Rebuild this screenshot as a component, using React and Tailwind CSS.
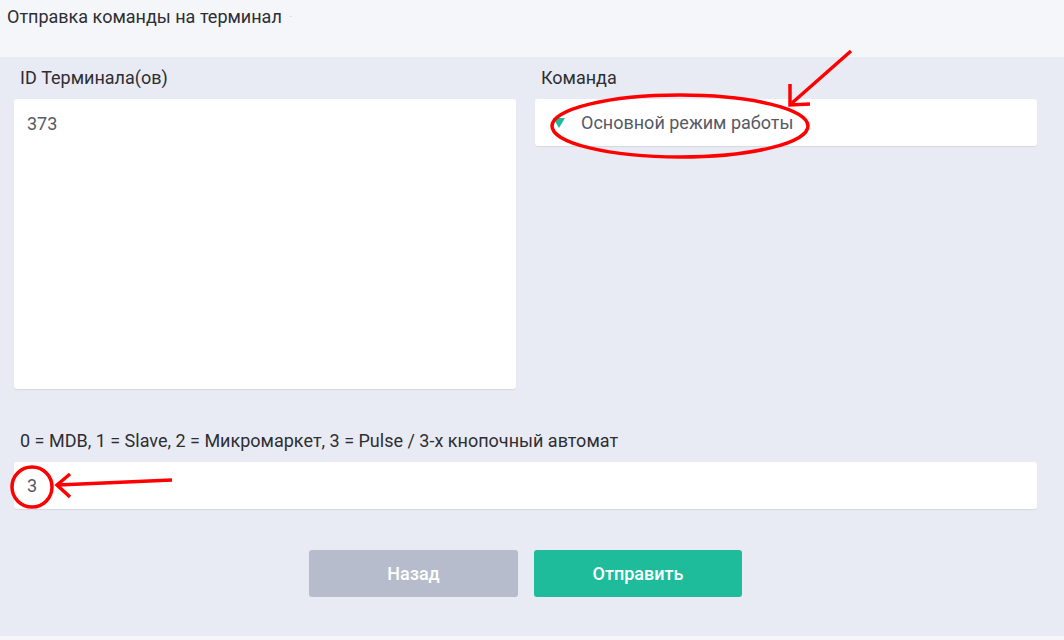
export default function App() {
  return (
    <div className="relative w-[1064px] h-[640px] overflow-hidden bg-[#f4f6fa] font-['Roboto',sans-serif] text-[#2e2e33]">
      <div className="h-[57px] px-[7px] pt-[5px] text-[18px] leading-[24px] flex items-start gap-[8px]">
        <span>Отправка команды на терминал</span>
        <span className="text-[8px] text-gray-400 leading-[24px]">·</span>
      </div>

      <div className="h-[579px] bg-[#e8ebf3] pl-[14px] pr-[27px] pt-[10px]">
        <div className="grid grid-cols-2 gap-[19px]">
          <div>
            <div className="pl-[6px] text-[18px] leading-[22px] h-[32px]">ID Терминала(ов)</div>
            <div className="h-[290px] bg-white rounded-[3px] shadow-[0_1px_1px_rgba(0,0,0,0.08)] px-[13px] pt-[14px] text-[18px] leading-[22px] text-[#555a66]">
              373
            </div>
          </div>
          <div>
            <div className="pl-[6px] text-[18px] leading-[22px] h-[32px]">Команда</div>
            <div className="h-[47px] bg-white rounded-[3px] shadow-[0_1px_1px_rgba(0,0,0,0.08)] flex items-center pl-[18px] text-[18px] text-[#555a66]">
              <svg width="12" height="10" viewBox="0 0 12 10" className="mr-[16px]">
                <polygon points="0,0 12,0 6,10" fill="#1ebc9b" />
              </svg>
              Основной режим работы
            </div>
          </div>
        </div>

        <div className="mt-[41px] pl-[6px] text-[18px] leading-[22px] h-[32px]">
          0 = MDB, 1 = Slave, 2 = Микромаркет, 3 = Pulse / 3-х кнопочный автомат
        </div>
        <div className="h-[47px] bg-white rounded-[3px] shadow-[0_1px_1px_rgba(0,0,0,0.08)] flex items-center pl-[13px] text-[18px] text-[#555a66]">
          3
        </div>

        <div className="mt-[41px] flex justify-center gap-[16px]">
          <button className="w-[209px] h-[47px] rounded-[3px] bg-[#b6bccc] text-white text-[18px] font-medium">Назад</button>
          <button className="w-[208px] h-[47px] rounded-[3px] bg-[#1ebc9b] text-white text-[18px] font-medium">Отправить</button>
        </div>
      </div>

      <svg className="absolute left-0 top-0 pointer-events-none" width="1064" height="640">
        <ellipse cx="680" cy="126" rx="128" ry="31" fill="none" stroke="#ff0000" strokeWidth="3.5" />
        <line x1="851" y1="51" x2="792" y2="103" stroke="#ff0000" strokeWidth="3.5" />
        <polyline points="790,84 790,105 810,104" fill="none" stroke="#ff0000" strokeWidth="3.5" />
        <circle cx="32" cy="487" r="20" fill="none" stroke="#ff0000" strokeWidth="3.5" />
        <line x1="172" y1="480" x2="58" y2="485" stroke="#ff0000" strokeWidth="3.5" />
        <polyline points="70,474 57,485 70,497" fill="none" stroke="#ff0000" strokeWidth="3.5" />
      </svg>
    </div>
  )
}
